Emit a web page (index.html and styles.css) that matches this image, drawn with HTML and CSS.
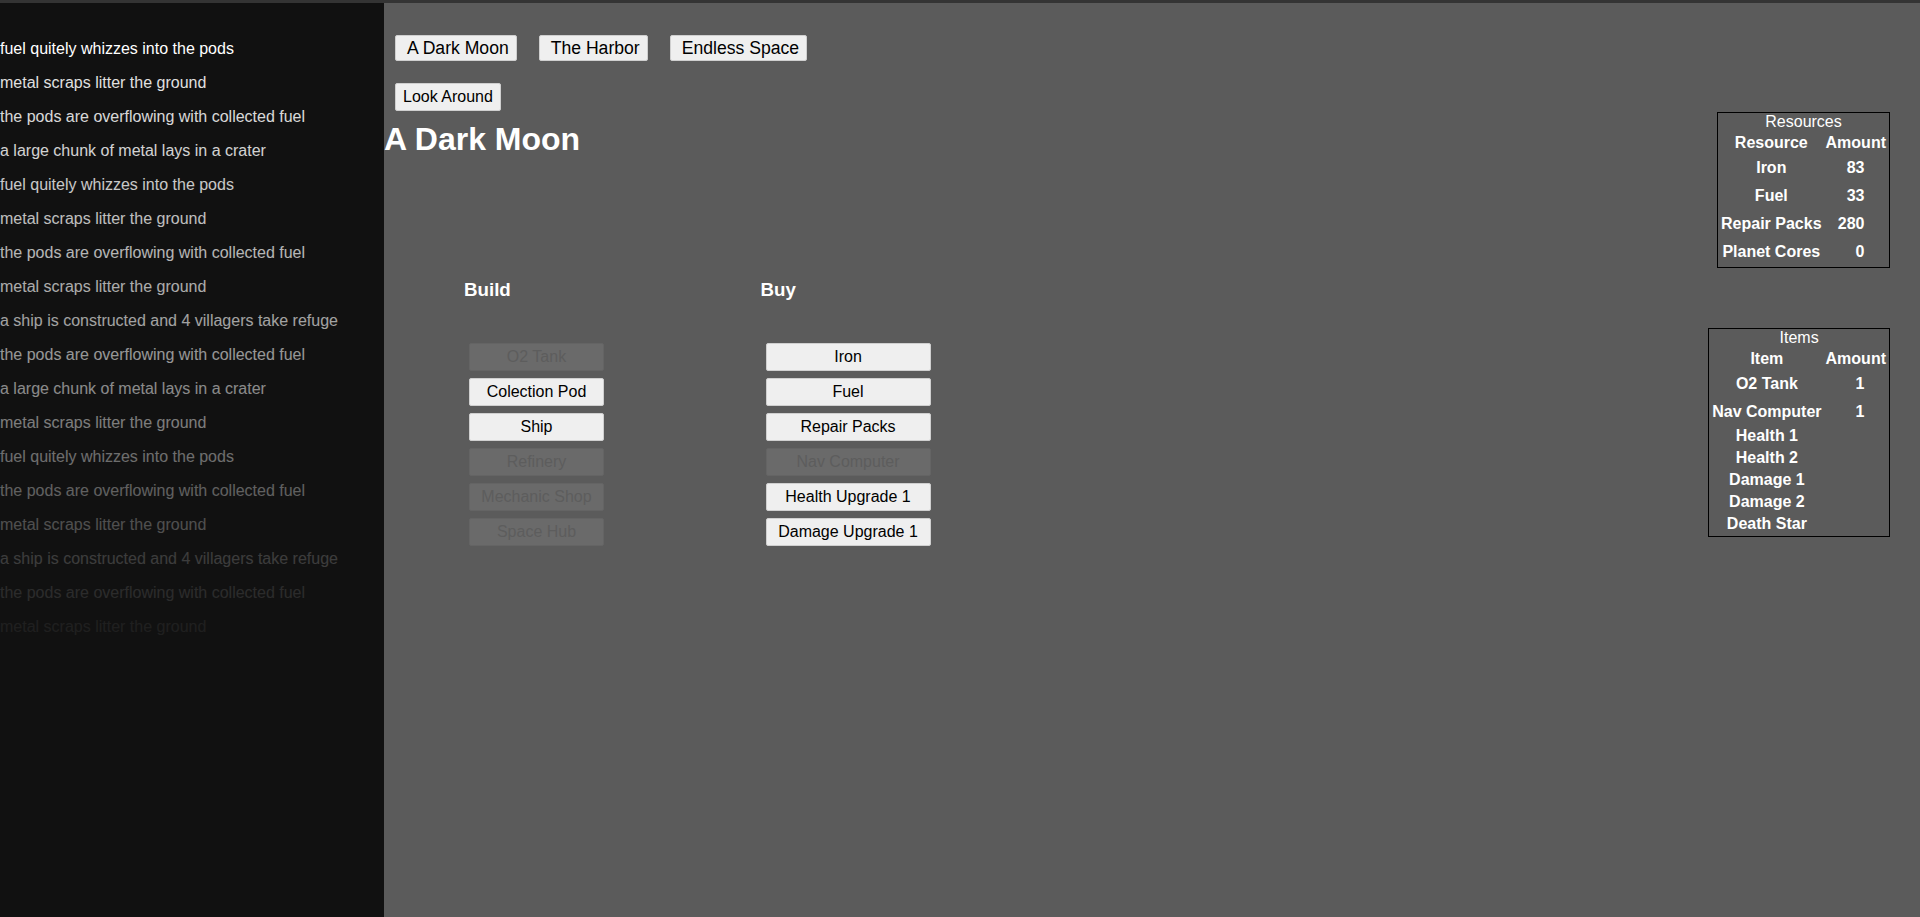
FILE: index.html
```html
<!DOCTYPE html>
<html lang="en">
<head>
<meta charset="utf-8">
<title>A Dark Moon</title>
<link rel="stylesheet" href="styles.css">
</head>
<body>
<div class="app">
  <aside class="log">
    <p class="line" style="opacity:1">fuel quitely whizzes into the pods</p>
    <p class="line" style="opacity:0.87">metal scraps litter the ground</p>
    <p class="line" style="opacity:0.84">the pods are overflowing with collected fuel</p>
    <p class="line" style="opacity:0.81">a large chunk of metal lays in a crater</p>
    <p class="line" style="opacity:0.77">fuel quitely whizzes into the pods</p>
    <p class="line" style="opacity:0.73">metal scraps litter the ground</p>
    <p class="line" style="opacity:0.69">the pods are overflowing with collected fuel</p>
    <p class="line" style="opacity:0.65">metal scraps litter the ground</p>
    <p class="line" style="opacity:0.61">a ship is constructed and 4 villagers take refuge</p>
    <p class="line" style="opacity:0.56">the pods are overflowing with collected fuel</p>
    <p class="line" style="opacity:0.51">a large chunk of metal lays in a crater</p>
    <p class="line" style="opacity:0.45">metal scraps litter the ground</p>
    <p class="line" style="opacity:0.39">fuel quitely whizzes into the pods</p>
    <p class="line" style="opacity:0.33">the pods are overflowing with collected fuel</p>
    <p class="line" style="opacity:0.26">metal scraps litter the ground</p>
    <p class="line" style="opacity:0.18">a ship is constructed and 4 villagers take refuge</p>
    <p class="line" style="opacity:0.11">the pods are overflowing with collected fuel</p>
    <p class="line" style="opacity:0.06">metal scraps litter the ground</p>
  </aside>

  <main class="main">
    <div class="content">
      <nav class="locations">
        <button class="loc">A Dark Moon</button>
        <button class="loc">The Harbor</button>
        <button class="loc">Endless Space</button>
      </nav>
      <button class="look">Look Around</button>
      <h1 class="title">A Dark Moon</h1>

      <div class="shop">
        <section class="col col-build">
          <h3 class="col-head">Build</h3>
          <div class="btns">
            <button class="act act-build" disabled>O2 Tank</button>
            <button class="act act-build">Colection Pod</button>
            <button class="act act-build">Ship</button>
            <button class="act act-build" disabled>Refinery</button>
            <button class="act act-build" disabled>Mechanic Shop</button>
            <button class="act act-build" disabled>Space Hub</button>
          </div>
        </section>
        <section class="col col-buy">
          <h3 class="col-head">Buy</h3>
          <div class="btns">
            <button class="act act-buy">Iron</button>
            <button class="act act-buy">Fuel</button>
            <button class="act act-buy">Repair Packs</button>
            <button class="act act-buy" disabled>Nav Computer</button>
            <button class="act act-buy">Health Upgrade 1</button>
            <button class="act act-buy">Damage Upgrade 1</button>
          </div>
        </section>
      </div>
    </div>

    <aside class="stores">
      <div class="panel panel-res">
        <div class="panel-title">Resources</div>
        <table class="tbl">
          <tr><td>Resource</td><td>Amount</td></tr>
          <tr class="tall"><td>Iron</td><td class="amt">83</td></tr>
          <tr class="tall"><td>Fuel</td><td class="amt">33</td></tr>
          <tr class="tall"><td>Repair Packs</td><td class="amt">280</td></tr>
          <tr class="tall"><td>Planet Cores</td><td class="amt">0</td></tr>
        </table>
      </div>
      <div class="panel panel-items">
        <div class="panel-title">Items</div>
        <table class="tbl">
          <tr><td>Item</td><td>Amount</td></tr>
          <tr class="tall"><td>O2 Tank</td><td class="amt">1</td></tr>
          <tr class="tall"><td>Nav Computer</td><td class="amt">1</td></tr>
          <tr><td>Health 1</td><td></td></tr>
          <tr><td>Health 2</td><td></td></tr>
          <tr><td>Damage 1</td><td></td></tr>
          <tr><td>Damage 2</td><td></td></tr>
          <tr><td>Death Star</td><td></td></tr>
        </table>
      </div>
    </aside>
  </main>
</div>
</body>
</html>
```

FILE: styles.css
```css
html, body {
  margin: 0;
  padding: 0;
  height: 100%;
}

body {
  background: #5b5b5b;
  border-top: 3px solid #343434;
  box-sizing: border-box;
  font-family: "Liberation Sans", Arial, sans-serif;
  font-size: 16px;
  color: #ffffff;
  overflow: hidden;
}

.app {
  display: flex;
  height: 100%;
}

/* ---------- notification log ---------- */
.log {
  width: 384px;
  flex: 0 0 384px;
  background: #111111;
  padding-top: 21px;
  box-sizing: border-box;
}

.line {
  margin: 16px 0;
  line-height: 18px;
  color: #ffffff;
  white-space: nowrap;
}

/* ---------- main area ---------- */
.main {
  flex: 1;
  display: flex;
  justify-content: space-between;
  align-items: flex-start;
}

.content {
  padding-top: 32px;
}

.locations {
  display: flex;
  gap: 22px;
  padding-left: 11px;
}

button {
  font-family: "Liberation Sans", Arial, sans-serif;
  color: #000000;
  background: #efefef;
  border: 1px solid #cfcfcf;
  border-radius: 2px;
  margin: 0;
  cursor: pointer;
}

.loc {
  font-size: 17.6px;
  line-height: 20px;
  padding: 2px 7px 2px 11px;
}

.look {
  display: block;
  margin: 22px 0 0 11px;
  font-size: 16px;
  line-height: 18px;
  padding: 4px 7px;
}

.title {
  margin: 10px 0 0;
  font-size: 32px;
  line-height: 37px;
  font-weight: bold;
  color: #ffffff;
}

.shop {
  display: flex;
  padding-left: 80px;
  margin-top: 121px;
}

.col-build {
  width: 296.5px;
}

.col-head {
  margin: 0;
  font-size: 18.72px;
  line-height: 21.5px;
  font-weight: bold;
  color: #ffffff;
}

.btns {
  display: flex;
  flex-direction: column;
  gap: 7px;
  padding-left: 5px;
  margin-top: 42px;
}

.act {
  height: 28px;
  font-size: 16px;
  line-height: 18px;
  padding: 0 4px;
  text-align: center;
}

.act-build { width: 135px; }
.act-buy { width: 165px; }

.act:disabled {
  background: #6a6a6a;
  border-color: #646464;
  color: #5d5d5d;
  cursor: default;
}

/* ---------- stores ---------- */
.stores {
  display: flex;
  flex-direction: column;
  align-items: flex-end;
  padding-top: 109px;
  padding-right: 30px;
}

.panel {
  border: 1px solid #000000;
}

.panel-items {
  margin-top: 60px;
}

.panel-title {
  text-align: center;
  font-weight: normal;
  line-height: normal;
}

.tbl {
  border-spacing: 2px;
  font-weight: bold;
}

.tbl td {
  padding: 1px;
  text-align: center;
  line-height: normal;
}

.tbl .tall td {
  line-height: 23.9px;
}

.tbl .tall td.amt {
  text-align: right;
  padding-right: 22.5px;
}
```
